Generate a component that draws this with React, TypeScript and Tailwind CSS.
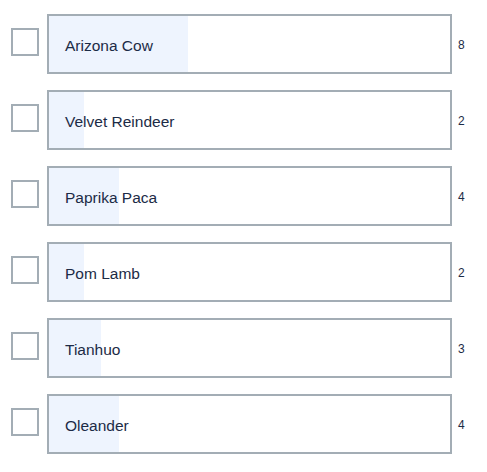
import React from 'react';

const options = [
  { name: 'Arizona Cow', votes: 8 },
  { name: 'Velvet Reindeer', votes: 2 },
  { name: 'Paprika Paca', votes: 4 },
  { name: 'Pom Lamb', votes: 2 },
  { name: 'Tianhuo', votes: 3 },
  { name: 'Oleander', votes: 4 },
];

export default function App() {
  const total = options.reduce((s, o) => s + o.votes, 0);

  return (
    <div
      className="min-h-screen bg-white pt-[14px] pl-[11px] flex flex-col gap-4"
      style={{ fontFamily: '"Liberation Sans", Arial, sans-serif' }}
    >
      {options.map((o) => (
        <div key={o.name} className="flex items-start">
          <div className="mt-[14px] w-[28px] h-[28px] border-2 border-[#a3adb5] bg-white shrink-0" />
          <div className="ml-2 relative w-[405px] h-[60px] border-2 border-[#a3adb5] bg-white flex items-center">
            <div
              className="absolute left-0 top-0 bottom-0 bg-[#eef4fe]"
              style={{ width: `${(o.votes / total) * 100}%` }}
            />
            <span className="relative pl-4 pt-[3px] text-[15.5px] text-[#1c2b46]">{o.name}</span>
          </div>
          <div className="ml-[6px] h-[60px] pt-[2px] flex items-center text-[12px] text-[#1c2b46]">
            {o.votes}
          </div>
        </div>
      ))}
    </div>
  );
}
